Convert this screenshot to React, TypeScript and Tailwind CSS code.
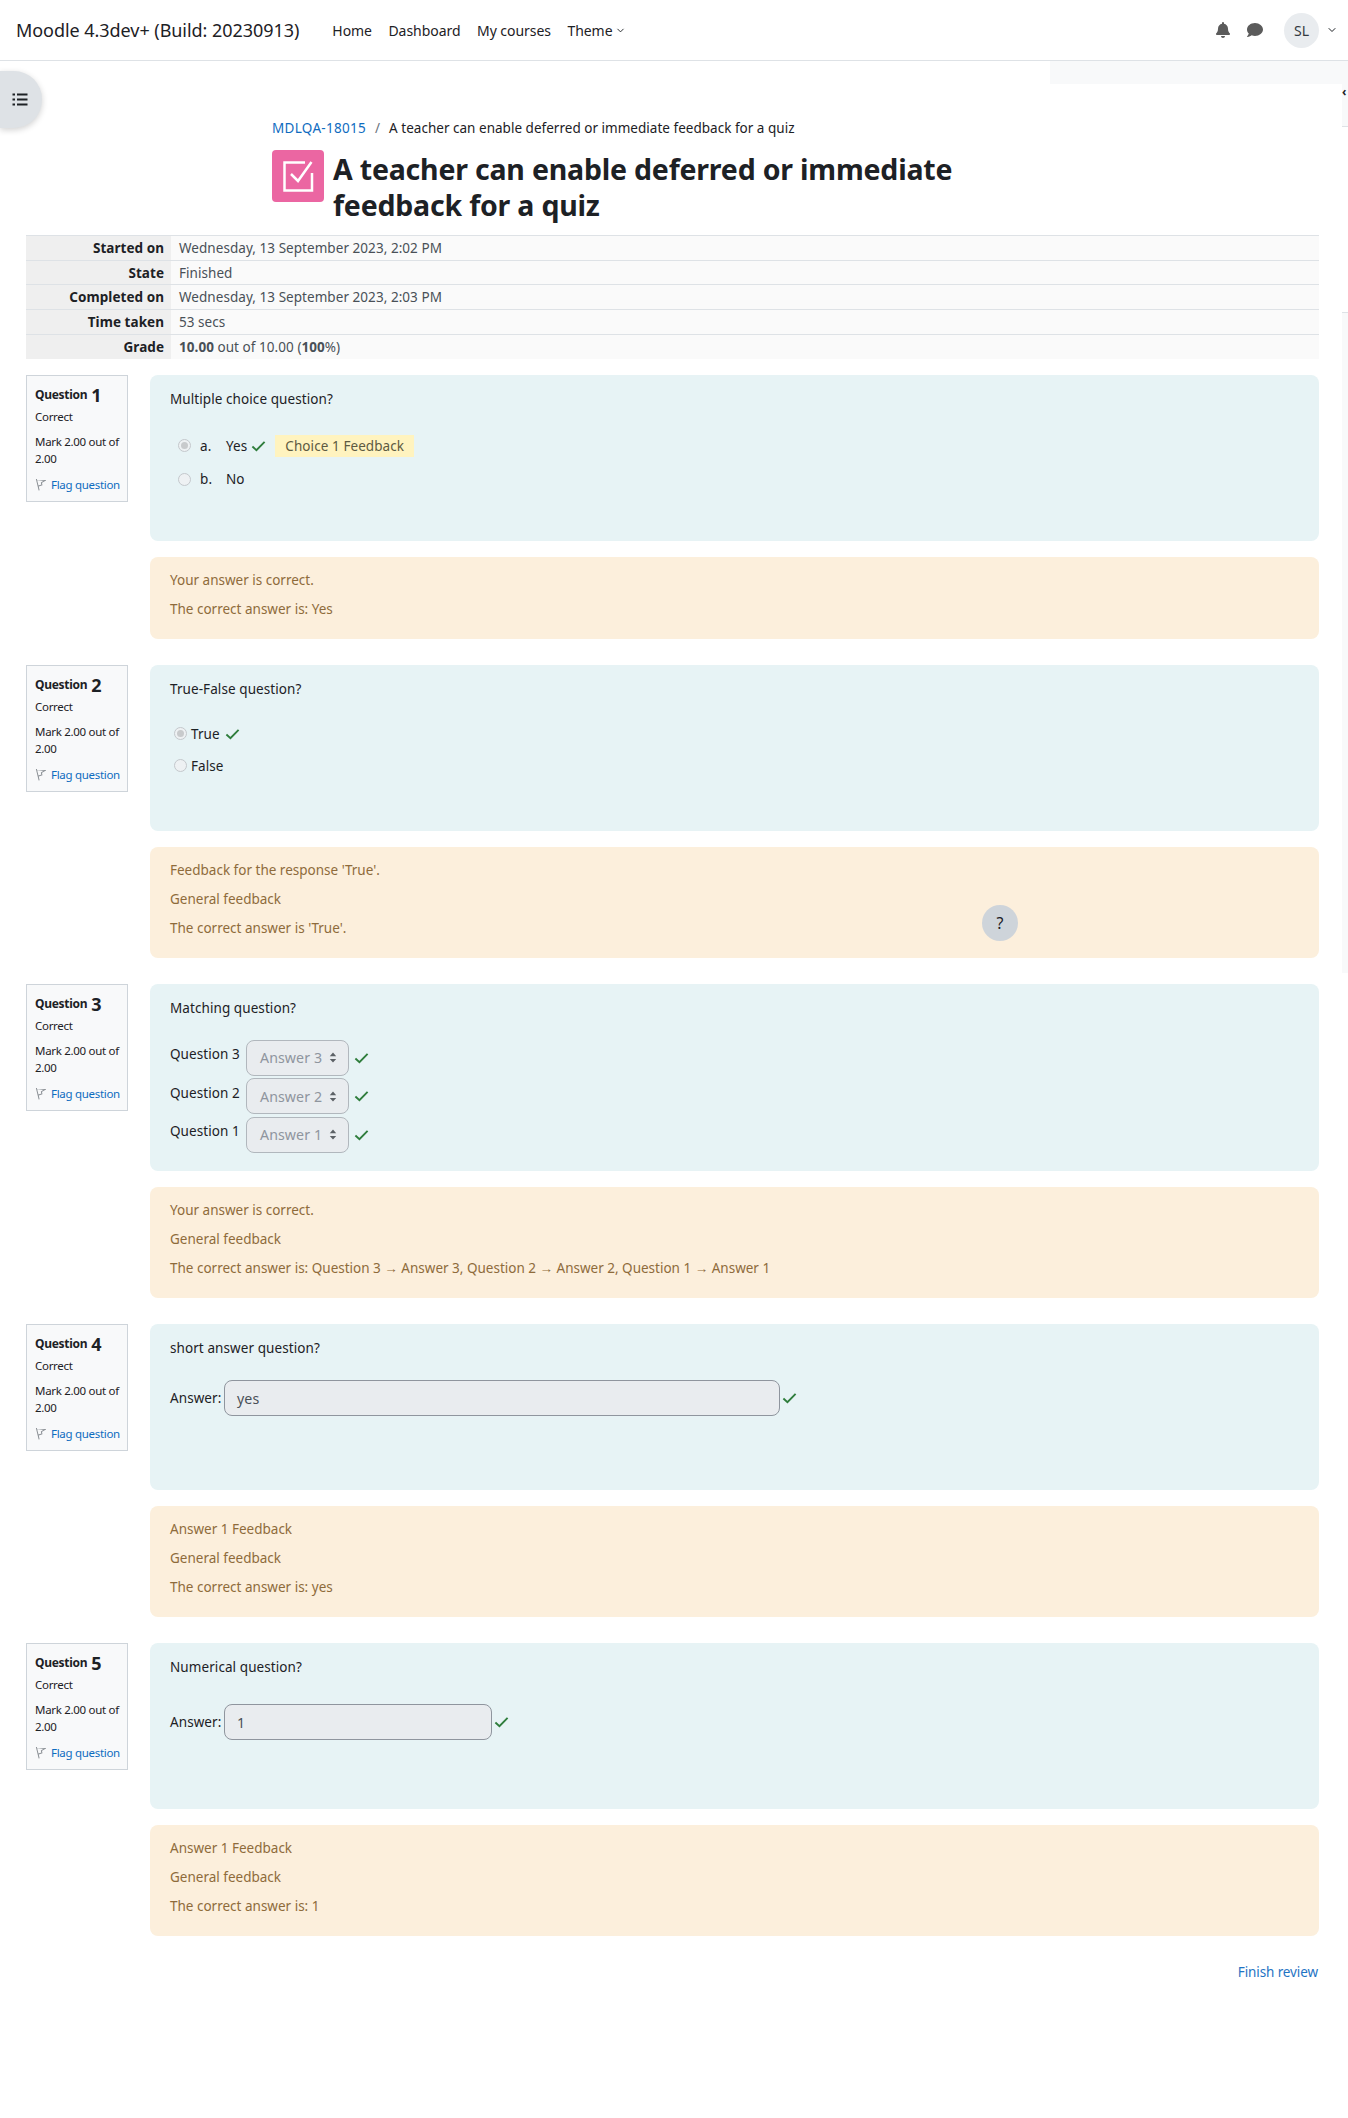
import { ChevronDown } from "lucide-react";

const font = "font-['Noto_Sans',sans-serif]";

function Check({ className }: { className?: string }) {
  return (
    <svg viewBox="0 0 16 12" className={className ?? "w-[15px] h-[12px]"}>
      <path d="M1.5 6.5 L5.8 10.5 L14.5 1.5" fill="none" stroke="#2f7d3c" strokeWidth="2" />
    </svg>
  );
}

function FlagIcon() {
  return (
    <svg viewBox="0 0 12 14" className="w-[11px] h-[13px] shrink-0">
      <path d="M1.5 1 L4.5 13.5 M1.5 1.5 L11 2.5 L7 5 L7.5 7.5 L3 9" fill="none" stroke="#8a8f94" strokeWidth="1.1" />
    </svg>
  );
}

function Radio({ checked }: { checked?: boolean }) {
  return (
    <span className="w-[13px] h-[13px] rounded-full border border-[#c4c8cc] bg-[#eef1f3] flex items-center justify-center shrink-0">
      {checked && <span className="w-[7px] h-[7px] rounded-full bg-[#c8cacc]" />}
    </span>
  );
}

function Info({ n }: { n: number }) {
  return (
    <div className="w-[102px] h-[127px] shrink-0 bg-[#f8f9fa] border border-[#ced4da] px-[8px] pt-[7px] text-[11.5px] text-[#1d2125] tracking-[-0.3px]">
      <div className="h-[24px] flex items-center font-bold text-[12px]">
        Question <span className="text-[18px] ml-[4px] leading-none">{n}</span>
      </div>
      <div className="mt-[1px] leading-[17px]">Correct</div>
      <div className="mt-[9px] leading-[16.5px]">Mark 2.00 out of 2.00</div>
      <div className="mt-[9px] flex items-center gap-[5px] leading-[17px] whitespace-nowrap">
        <FlagIcon />
        <span className="text-[#0f6cbf]">Flag question</span>
      </div>
    </div>
  );
}

function Feedback({ lines, h }: { lines: string[]; h: string }) {
  return (
    <div className={`${h} mt-[16px] bg-[#fcefdc] rounded-[8px] px-[20px] pt-[8.5px] text-[13.5px] text-[#8e6b3b] leading-[29px]`}>
      {lines.map((l) => (
        <div key={l}>{l}</div>
      ))}
    </div>
  );
}

function Question({
  n,
  text,
  h,
  lines,
  fbH,
  children,
}: {
  n: number;
  text: string;
  h: string;
  lines: string[];
  fbH: string;
  children: React.ReactNode;
}) {
  return (
    <div className="flex gap-[22px] mb-[26px]">
      <Info n={n} />
      <div className="flex-1">
        <div className={`${h} bg-[#e7f3f5] rounded-[8px] px-[20px] pt-[14px] text-[13.5px] text-[#1d2125] tracking-[0.08px]`}>
          <div className="leading-[20px]">{text}</div>
          {children}
        </div>
        <Feedback lines={lines} h={fbH} />
      </div>
    </div>
  );
}

function FakeSelect({ q, a }: { q: string; a: string }) {
  return (
    <div className="flex h-[38.5px] items-center">
      <span className="w-[76px] -mt-[7px]">{q}</span>
      <span className="w-[103px] h-[36px] rounded-[8px] border border-[#b1b7bd] bg-[#e9ecef] flex items-center pl-[13px] text-[#8f959e] text-[14.2px]">
        {a}
        <svg viewBox="0 0 8 12" className="w-[8px] h-[11px] ml-[7px]">
          <path d="M4 0.5 L7.5 4.5 L0.5 4.5 Z M4 11.5 L7.5 7.5 L0.5 7.5 Z" fill="#5c6166" />
        </svg>
      </span>
      <Check className="w-[15px] h-[12px] ml-[5px]" />
    </div>
  );
}

function AnswerBox({ value, w, mt }: { value: string; w: string; mt: string }) {
  return (
    <div className={`${mt} flex items-center`}>
      <span className="w-[54px]">Answer:</span>
      <span className={`${w} h-[36px] rounded-[8px] border border-[#8f959e] bg-[#e9ecef] flex items-center pl-[12px] text-[#495057] text-[14.2px]`}>
        {value}
      </span>
      <Check className="w-[15px] h-[12px] ml-[2px]" />
    </div>
  );
}

const summary: [string, React.ReactNode][] = [
  ["Started on", "Wednesday, 13 September 2023, 2:02 PM"],
  ["State", "Finished"],
  ["Completed on", "Wednesday, 13 September 2023, 2:03 PM"],
  ["Time taken", "53 secs"],
  [
    "Grade",
    <>
      <b>10.00</b> out of 10.00 (<b>100</b>%)
    </>,
  ],
];

export default function App() {
  return (
    <div className={`${font} relative h-[2118px] w-[1348px] bg-white overflow-hidden text-[#1d2125]`}>
      {/* Navbar */}
      <div className="h-[61px] border-b border-[#dee2e6] flex items-center pl-[16px] pr-[10px]">
        <span className="text-[18px] tracking-[-0.05px]">Moodle 4.3dev+ (Build: 20230913)</span>
        <nav className="ml-[33px] flex items-center gap-[16.5px] text-[14px] tracking-[-0.05px]">
          <span>Home</span>
          <span>Dashboard</span>
          <span>My courses</span>
          <span className="flex items-center gap-[3px]">
            Theme <ChevronDown size={11} />
          </span>
        </nav>
        <div className="ml-auto flex items-center">
          <svg viewBox="0 0 448 512" className="w-[14px] h-[16px]">
            <path fill="#5b5b5b" d="M224 512c35 0 64-29 64-64H160c0 35 29 64 64 64zm215-150c-19-21-56-52-56-154 0-78-54-140-127-155V32a32 32 0 1 0-64 0v21C119 68 65 130 65 208c0 102-37 133-56 154-6 6-9 14-9 22 0 16 13 32 32 32h384c19 0 32-16 32-32 0-8-3-16-9-22z" />
          </svg>
          <svg viewBox="0 0 512 512" className="w-[16px] h-[16px] ml-[17px]">
            <path fill="#5b5b5b" d="M256 32C115 32 0 125 0 240c0 49 21 95 57 130-12 50-54 95-55 95-2 2-3 6-1 9s4 4 7 4c66 0 116-32 142-51 33 12 69 19 106 19 141 0 256-93 256-206S397 32 256 32z" />
          </svg>
          <span className="ml-[21px] w-[35px] h-[35px] rounded-full bg-[#e9ecef] flex items-center justify-center text-[14px] text-[#343a40]">
            SL
          </span>
          <ChevronDown size={12} className="ml-[7px]" />
        </div>
      </div>

      {/* Overlays */}
      <div className="absolute left-[1050px] top-[61px] w-[298px] h-[23px] bg-[#f8f9fa]" />
      <div className="absolute left-[1342px] top-[84px] w-[6px] h-[43px] bg-[#f8f9fa] border-b border-[#dee2e6] text-[12px] font-bold leading-[14px]">
        <span className="block mt-[1px]">‹</span>
      </div>
      <div className="absolute left-[1342px] top-[312px] w-[6px] h-[661px] bg-[#f8f9fa] border-t border-[#dee2e6]" />
      <div className="absolute left-0 top-[71px] w-[42px] h-[57px] rounded-r-[28px] bg-[#dee2e6] shadow-[0_2px_6px_rgba(0,0,0,0.18)] flex items-center justify-center">
        <svg viewBox="0 0 16 13" className="w-[16px] h-[13px] -ml-[3px]">
          <path d="M0.5 1.5h2.5M0.5 6.5h2.5M0.5 11.5h2.5M5 1.5h10.5M5 6.5h10.5M5 11.5h10.5" stroke="#1d2125" strokeWidth="2" fill="none" />
        </svg>
      </div>
      <div className="absolute left-[982px] top-[905px] w-[36px] h-[36px] rounded-full bg-[#ced4da] flex items-center justify-center text-[16px]">
        ?
      </div>

      {/* Page header */}
      <div className="ml-[272px] pt-[57px]">
        <div className="text-[13.5px] leading-[20px] tracking-[0.02px]">
          <span className="text-[#0f6cbf] tracking-[0.3px]">MDLQA-18015</span>
          <span className="text-[#6a737b] mx-[9px]">/</span>
          <span>A teacher can enable deferred or immediate feedback for a quiz</span>
        </div>
        <div className="mt-[8px] flex">
          <div className="w-[52px] h-[52px] mt-[4px] rounded-[4px] bg-[#eb66a2] flex items-center justify-center shrink-0">
            <svg viewBox="0 0 32 32" className="w-[32px] h-[32px]">
              <path d="M23 2.5H2.5V30.5H30V13" fill="none" stroke="#fff" strokeWidth="2.5" />
              <path d="M9 14l7 7L29.5 2" fill="none" stroke="#fff" strokeWidth="2.5" />
            </svg>
          </div>
          <h1 className="ml-[9px] mt-[5px] w-[700px] text-[28.5px] leading-[36px] font-bold tracking-[-0.2px]">
            A teacher can enable deferred or immediate feedback for a quiz
          </h1>
        </div>
      </div>

      <div className="ml-[26px] mr-[29px]">
        {/* Summary table */}
        <div className="mt-[12px] border-t border-[#dee2e6] text-[13.5px] tracking-[0.05px] mb-[16px]">
          {summary.map(([k, v], i) => (
            <div key={k} className={`flex h-[24.7px] ${i < 4 ? "border-b border-[#dee2e6]" : ""}`}>
              <div className="w-[145px] bg-[#efefef] text-right pr-[7px] font-bold leading-[25px]">{k}</div>
              <div className="flex-1 bg-[#fafafa] pl-[8px] text-[#495057] leading-[25px]">{v}</div>
            </div>
          ))}
        </div>

        <Question
          n={1}
          text="Multiple choice question?"
          h="h-[166px]"
          fbH="h-[82px]"
          lines={["Your answer is correct.", "The correct answer is: Yes"]}
        >
          <div className="mt-[19.5px] ml-[8px]">
            <div className="flex items-center h-[33.5px]">
              <Radio checked />
              <span className="ml-[9px] w-[26px]">a.</span>
              <span>Yes</span>
              <Check className="w-[15px] h-[12px] ml-[4px]" />
              <span className="ml-[9px] bg-[#fff3bf] px-[10px] h-[22px] leading-[22px] text-[#5d5a42]">Choice 1 Feedback</span>
            </div>
            <div className="flex items-center h-[33.5px]">
              <Radio />
              <span className="ml-[9px] w-[26px]">b.</span>
              <span>No</span>
            </div>
          </div>
        </Question>

        <Question
          n={2}
          text="True-False question?"
          h="h-[166px]"
          fbH="h-[111px]"
          lines={["Feedback for the response 'True'.", "General feedback", "The correct answer is 'True'."]}
        >
          <div className="mt-[18.5px] ml-[4px]">
            <div className="flex items-center h-[32px]">
              <Radio checked />
              <span className="ml-[4px]">True</span>
              <Check className="w-[15px] h-[12px] ml-[5px]" />
            </div>
            <div className="flex items-center h-[32px]">
              <Radio />
              <span className="ml-[4px]">False</span>
            </div>
          </div>
        </Question>

        <Question
          n={3}
          text="Matching question?"
          h="h-[187px]"
          fbH="h-[111px]"
          lines={[
            "Your answer is correct.",
            "General feedback",
            "The correct answer is: Question 3 → Answer 3, Question 2 → Answer 2, Question 1 → Answer 1",
          ]}
        >
          <div className="mt-[20px]">
            <FakeSelect q="Question 3" a="Answer 3" />
            <FakeSelect q="Question 2" a="Answer 2" />
            <FakeSelect q="Question 1" a="Answer 1" />
          </div>
        </Question>

        <Question
          n={4}
          text="short answer question?"
          h="h-[166px]"
          fbH="h-[111px]"
          lines={["Answer 1 Feedback", "General feedback", "The correct answer is: yes"]}
        >
          <AnswerBox value="yes" w="w-[556px]" mt="mt-[22px]" />
        </Question>

        <Question
          n={5}
          text="Numerical question?"
          h="h-[166px]"
          fbH="h-[111px]"
          lines={["Answer 1 Feedback", "General feedback", "The correct answer is: 1"]}
        >
          <AnswerBox value="1" w="w-[268px]" mt="mt-[27px]" />
        </Question>

        <div className="text-right text-[13.5px] text-[#1f74c4] mt-[2px] pr-[1px] tracking-[-0.1px]">Finish review</div>
      </div>
    </div>
  );
}
